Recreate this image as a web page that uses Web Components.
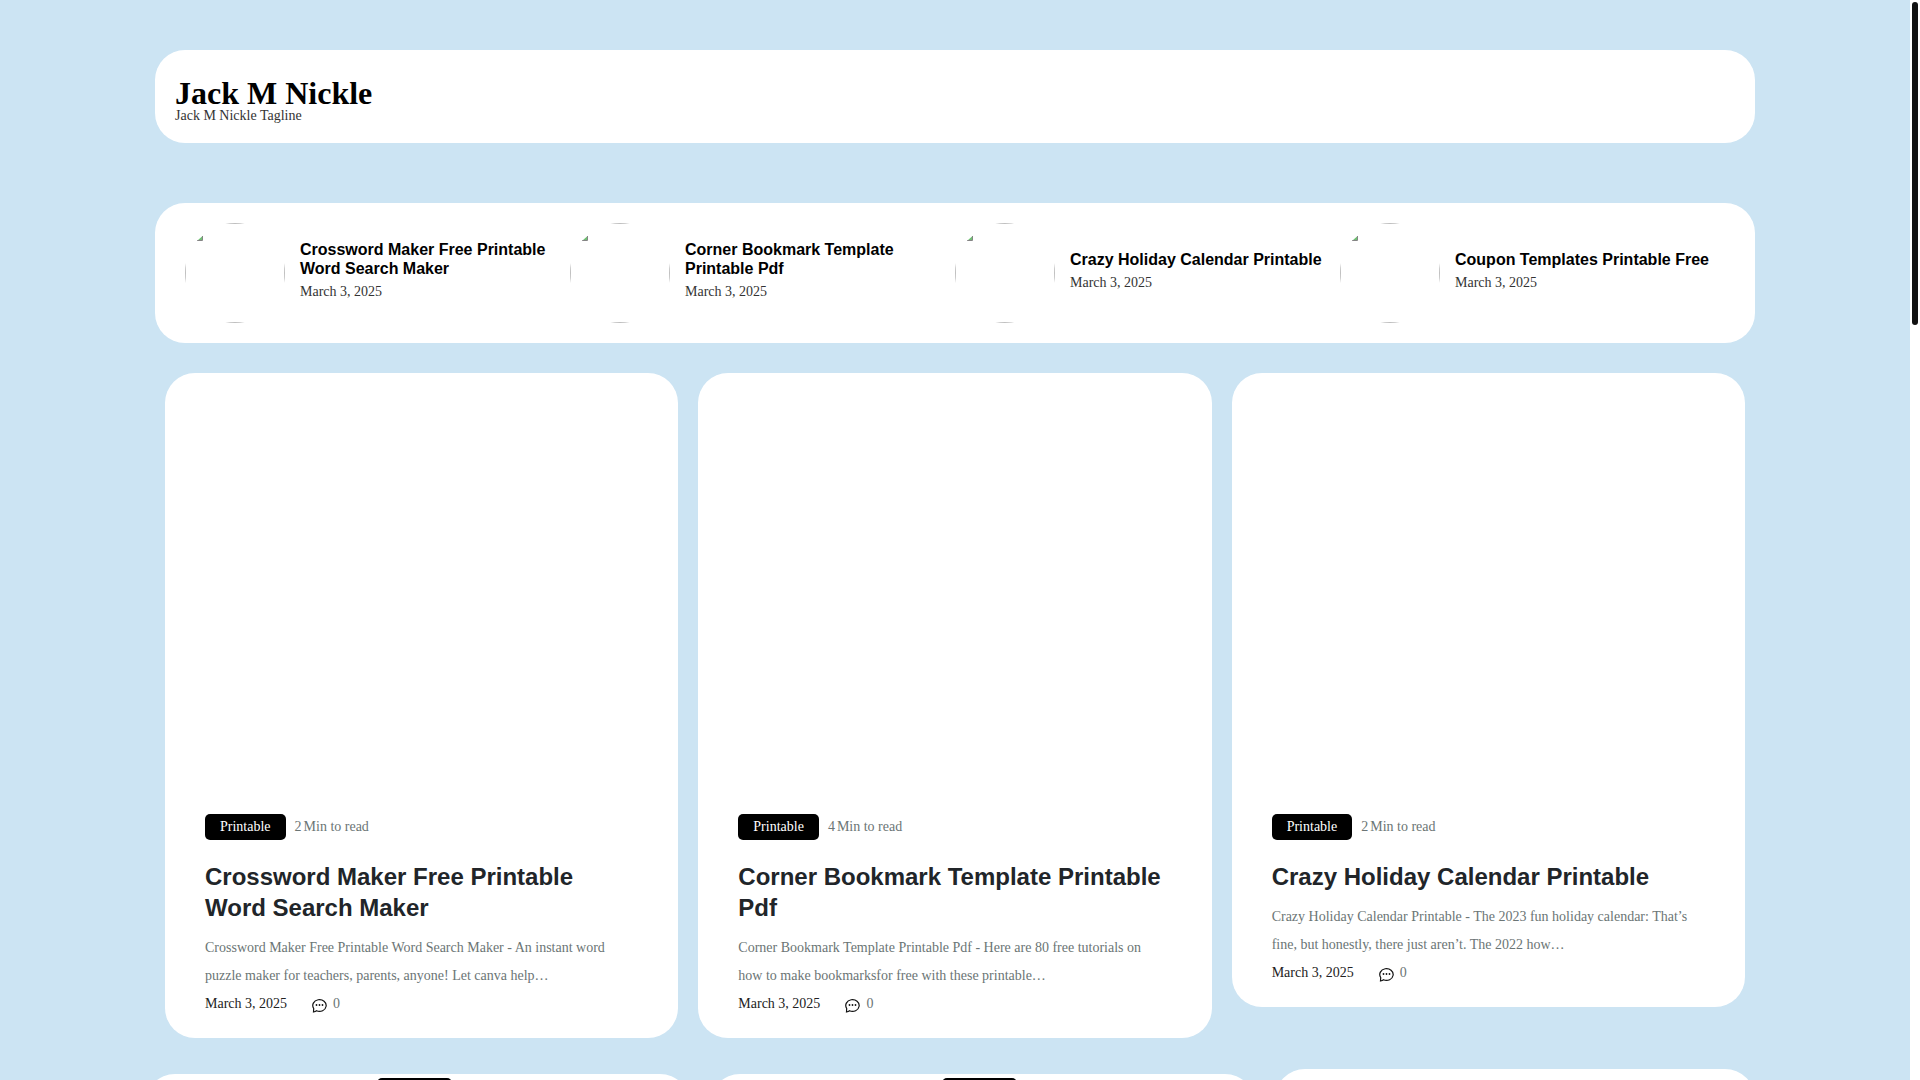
<!DOCTYPE html>
<html lang="en">
<head>
<meta charset="utf-8">
<title>Jack M Nickle</title>
<style>
html, body { margin: 0; height: 100%; }
body { font: 14px/28px "Liberation Serif", serif; color: #333; overflow: hidden; }
</style>
</head>
<body>
<blog-page>
  <site-header name="Jack M Nickle" tagline="Jack M Nickle Tagline"></site-header>
  <post-ticker>
    <ticker-item date="March 3, 2025">Crossword Maker Free Printable Word Search Maker</ticker-item>
    <ticker-item date="March 3, 2025">Corner Bookmark Template Printable Pdf</ticker-item>
    <ticker-item date="March 3, 2025">Crazy Holiday Calendar Printable</ticker-item>
    <ticker-item date="March 3, 2025">Coupon Templates Printable Free</ticker-item>
  </post-ticker>
  <card-grid>
    <post-card minutes="2" date="March 3, 2025" comments="0">
      <span slot="title">Crossword Maker Free Printable Word Search Maker</span>
      Crossword Maker Free Printable Word Search Maker - An instant word puzzle maker for teachers, parents, anyone! Let canva help…
    </post-card>
    <post-card minutes="4" date="March 3, 2025" comments="0">
      <span slot="title">Corner Bookmark Template Printable Pdf</span>
      Corner Bookmark Template Printable Pdf - Here are 80 free tutorials on how to make bookmarksfor free with these printable…
    </post-card>
    <post-card minutes="2" date="March 3, 2025" comments="0">
      <span slot="title">Crazy Holiday Calendar Printable</span>
      Crazy Holiday Calendar Printable - The 2023 fun holiday calendar: That’s fine, but honestly, there just aren’t. The 2022 how…
    </post-card>
  </card-grid>
  <blog-list>
    <list-card></list-card>
    <list-card></list-card>
    <side-panel slot="aside"></side-panel>
  </blog-list>
</blog-page>
<script>
const define = (name, html) => customElements.define(name, class extends HTMLElement {
  constructor() {
    super();
    this.attachShadow({ mode: 'open' }).innerHTML = html;
  }
  connectedCallback() {
    for (const el of this.shadowRoot.querySelectorAll('[data-attr]'))
      el.textContent = this.getAttribute(el.dataset.attr) || '';
  }
});

define('scroll-rail', `
<style>
:host { display: block; flex: none; width: 6px; padding: 2px; background: #fff; }
div { height: 30%; border-radius: 3px; background: #111; }
</style><div></div>`);

define('blog-page', `
<style>
:host { display: flex; height: 100vh; }
main { flex: 1; overflow: hidden; background: #cce4f3; }
.wrap { width: 84%; max-width: 1600px; margin: 0 auto; padding-top: 50px; }
</style>
<main><div class="wrap"><slot></slot></div></main>
<scroll-rail></scroll-rail>`);

define('site-header', `
<style>
:host { display: block; background: #fff; border-radius: 30px; padding: 27px 20px 20px; margin-bottom: 60px; }
h1 { margin: 0; font-size: 32px; line-height: 32px; }
a { color: #000; text-decoration: none; }
p { margin: 0; line-height: 14px; }
</style>
<h1><a href="#" data-attr="name"></a></h1>
<p data-attr="tagline"></p>`);

define('post-ticker', `
<style>
:host { display: flex; background: #fff; border-radius: 30px; padding: 20px 30px; margin-bottom: 30px; }
::slotted(*) { flex: 1; }
</style><slot></slot>`);

define('ticker-item', `
<style>
:host { display: flex; align-items: center; gap: 15px; min-width: 0; }
svg { flex: none; width: 100px; height: 100px; border-radius: 50%; }
h2 { margin: 0; font: bold 16px/19px "Liberation Sans", sans-serif; }
a { color: #000; text-decoration: none; }
.text { padding-right: 15px; }
time { display: block; line-height: 28px; }
</style>
<svg viewBox="0 0 100 100" aria-hidden="true">
  <rect x=".5" y=".5" width="99" height="99" fill="none" stroke="#c0c0c0"/>
  <path d="M13 17 L17 13.500 V17Z" fill="#6fbf73"/>
  <path d="M12 17.500 H17.500 V13" fill="none" stroke="#858585"/>
</svg>
<div class="text"><h2><a href="#"><slot></slot></a></h2><time data-attr="date"></time></div>`);

define('card-grid', `
<style>
:host { display: grid; grid-template-columns: repeat(3, 1fr); gap: 20px; align-items: start; padding: 0 10px; margin-bottom: 35px; }
</style><slot></slot>`);

define('post-card', `
<style>
:host { display: block; background: #fff; border-radius: 30px; padding: 0 40px 20px; color: #6b7575; }
.media { height: 400px; margin-bottom: 41px; }
.meta { display: flex; align-items: center; gap: 9px; line-height: 26px; }
.tag { background: #000; color: #fff; border-radius: 5px; padding: 0 15px; text-decoration: none; }
.read { display: flex; gap: 2px; }
h2 { margin: 21px 0 11px; padding-bottom: 0; font: bold 24px/31px "Liberation Sans", sans-serif; }
h2 a { color: #212529; text-decoration: none; }
p { margin: 0; padding-right: 8px; }
.foot { display: flex; align-items: center; }
time { color: #222; margin-right: 25px; }
svg { width: 15px; height: 15px; margin: 2px 6px 0 0; }
</style>
<div class="media"></div>
<div class="meta"><a class="tag" href="#">Printable</a><span class="read"><span data-attr="minutes"></span><span>Min to read</span></span></div>
<h2><a href="#"><slot name="title"></slot></a></h2>
<p><slot></slot></p>
<div class="foot"><time data-attr="date"></time>
<svg viewBox="0 0 15 15" aria-hidden="true"><path d="M1.500 14 L1.700 10.500 A6.700 5.900 0 1 1 4.500 12.800 Q3.500 13.700 1.500 14Z" fill="none" stroke="#111" stroke-width="1.200"/><g fill="#111"><circle cx="4.500" cy="7" r=".9"/><circle cx="7.500" cy="7" r=".9"/><circle cx="10.500" cy="7" r=".9"/></g></svg>
<span data-attr="comments"></span></div>`);

define('blog-list', `
<style>
:host { display: flex; gap: 20px; margin-top: 36px; margin-left: -10px; align-items: flex-start; }
.posts { flex: 1; display: grid; grid-template-columns: 1fr 1fr; gap: 20px; }
aside { flex: 0 0 480px; }
</style>
<div class="posts"><slot></slot></div><aside><slot name="aside"></slot></aside>`);

define('list-card', `
<style>
:host { display: block; background: #fff; border-radius: 30px; height: 400px; padding: 4px 6px 0 0; text-align: center; }
a { display: inline-block; background: #000; color: #fff; border-radius: 5px; padding: 10px 12px; line-height: 16px; vertical-align: top; text-decoration: none; }
</style><a href="#">Printable</a>`);

define('side-panel', `
<style>:host { display: block; height: 400px; margin-top: -5px; background: #fff; border-radius: 30px; }</style>`);
</script>
</body>
</html>
